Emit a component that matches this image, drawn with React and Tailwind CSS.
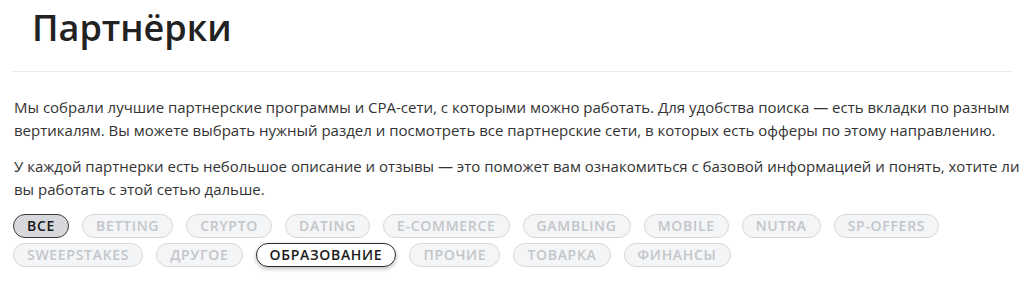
import React from "react";

const tags = [
  { label: "ВСЕ", state: "all" },
  { label: "BETTING" },
  { label: "CRYPTO" },
  { label: "DATING" },
  { label: "E-COMMERCE" },
  { label: "GAMBLING" },
  { label: "MOBILE" },
  { label: "NUTRA" },
  { label: "SP-OFFERS" },
  { label: "SWEEPSTAKES" },
  { label: "ДРУГОЕ" },
  { label: "ОБРАЗОВАНИЕ", state: "active" },
  { label: "ПРОЧИЕ" },
  { label: "ТОВАРКА" },
  { label: "ФИНАНСЫ" },
];

function Tag({ label, state }) {
  let cls = "bg-[#f4f5f6] border-[#d5d7da] text-[#c3c6ca]";
  if (state === "all") cls = "bg-[#d6d8db] border-[#3a3a3a] text-[#1a1a1a]";
  if (state === "active") cls = "bg-white border-[#2a2a2a] text-[#1a1a1a] shadow-[0_2px_4px_rgba(0,0,0,0.25)]";
  return (
    <button className={`h-6 px-[13px] rounded-full border text-[14px] font-semibold leading-none tracking-[0.7px] ${cls}`}>
      {label}
    </button>
  );
}

export default function App() {
  return (
    <div className="min-h-[305px] bg-white text-[#2b2b2b] px-3" style={{ fontFamily: '"Open Sans", sans-serif' }}>
      {/* Title */}
      <div className="border-b border-[#ececec] pt-[8px] pb-[23px] pl-[20px]">
        <h1 className="text-[36px] font-semibold leading-[40px] text-[#222]">Партнёрки</h1>
      </div>

      {/* Description */}
      <div className="pl-[2px] -mr-[12px] pt-[24px] text-[15px] font-medium leading-[23px] text-[#333]">
        <p>
          Мы собрали лучшие партнерские программы и CPA-сети, с которыми можно работать. Для удобства поиска — есть вкладки по разным
          вертикалям. Вы можете выбрать нужный раздел и посмотреть все партнерские сети, в которых есть офферы по этому направлению.
        </p>
        <p className="mt-[13px]">
          У каждой партнерки есть небольшое описание и отзывы — это поможет вам ознакомиться с базовой информацией и понять, хотите ли
          вы работать с этой сетью дальше.
        </p>
      </div>

      {/* Tags */}
      <div className="mt-[13px] flex flex-wrap gap-x-[13px] gap-y-[5px] pl-[1px]">
        {tags.map((t) => (
          <Tag key={t.label} {...t} />
        ))}
      </div>
    </div>
  );
}
